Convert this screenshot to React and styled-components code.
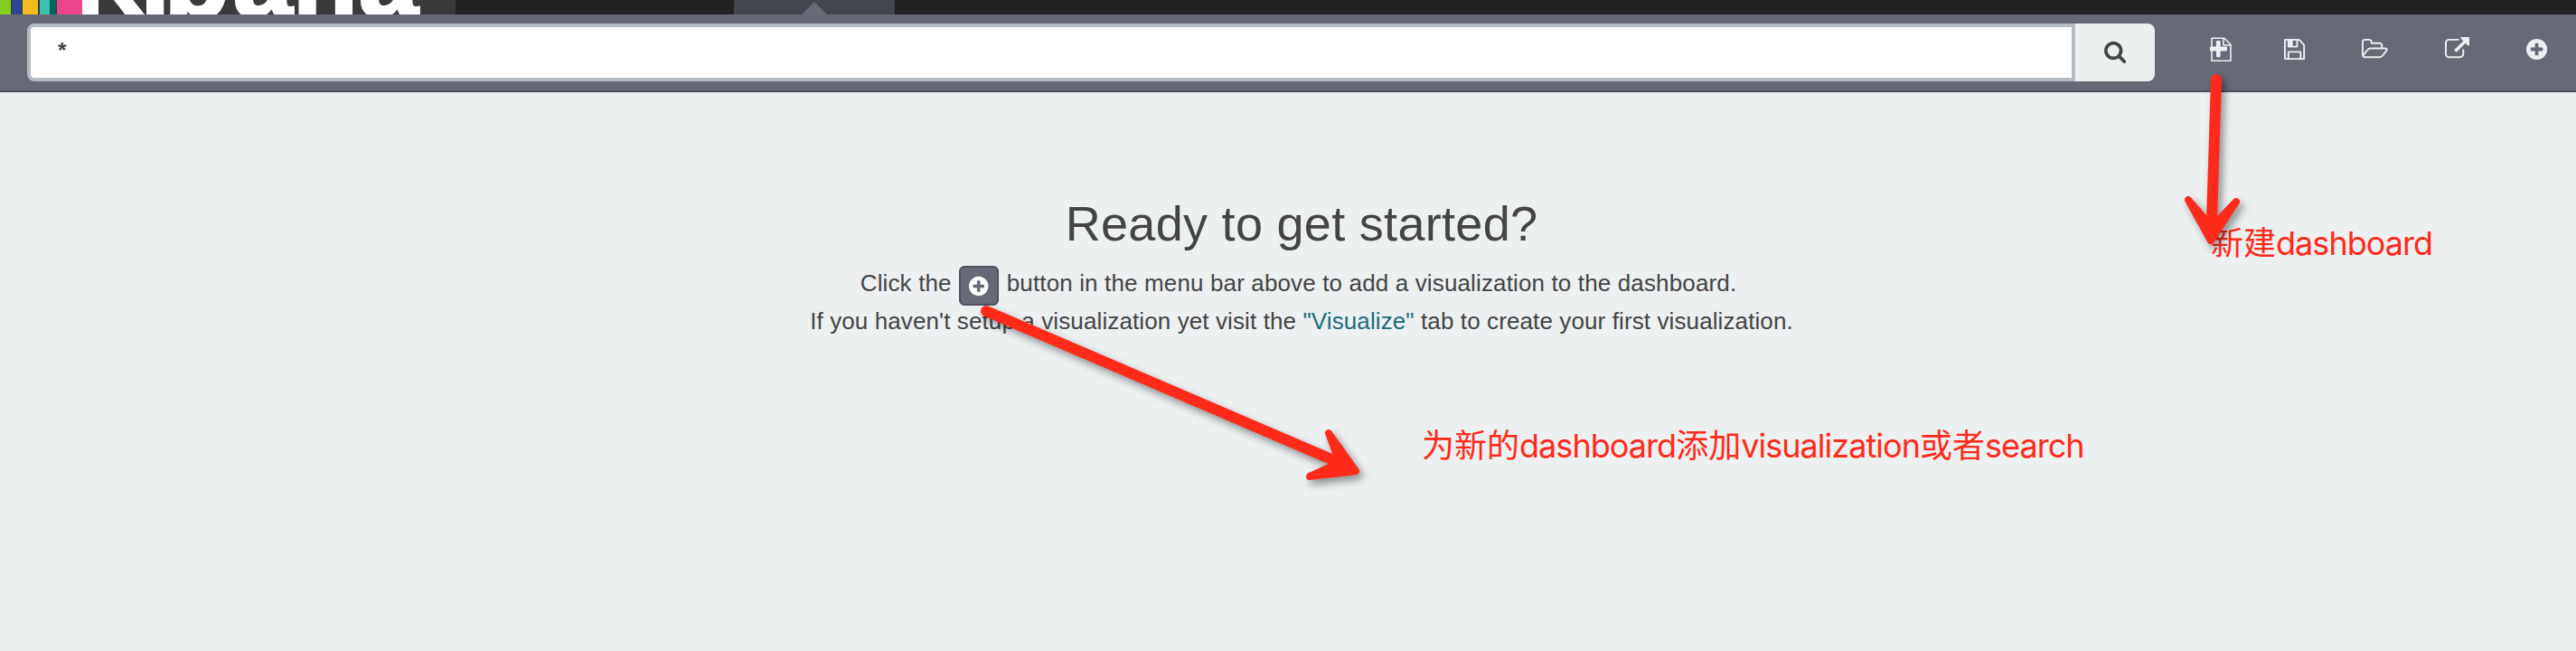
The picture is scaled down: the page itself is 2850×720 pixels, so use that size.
import React from "react";
import styled, { createGlobalStyle } from "styled-components";

const Global = createGlobalStyle`
  * { box-sizing: border-box; }
  body { margin: 0; background: #ecf0f1; font-family: "Liberation Sans", Arial, "Noto Sans CJK SC", sans-serif; color: #444; }
`;

const Page = styled.div`
  position: relative;
  width: 2850px;
  height: 720px;
  overflow: hidden;
  background: #ecf0f1;
`;

const NavBar = styled.header`
  display: flex;
  height: 16px;
  overflow: hidden;
  background: #222;
`;

const Brand = styled.div`
  display: flex;
  width: 504px;
  height: 16px;
  margin-right: 308px;
  overflow: hidden;
  background: #3a3a3a;
`;

const Stripe = styled.i`
  flex: none;
  width: ${(p) => p.$w}px;
  height: 16px;
  margin-right: ${(p) => p.$gap || 0}px;
  background: ${(p) => p.$color};
`;

const Wordmark = styled.span`
  align-self: flex-end;
  margin-bottom: -20px;
  margin-left: -5.5px;
  font-size: 118px;
  font-weight: 700;
  line-height: 118px;
  white-space: nowrap;
  color: #fff;
  -webkit-text-stroke: 3px #fff;
`;

const Letter = styled.span`
  font-size: ${(p) => p.$size || 118}px;
  line-height: 0;
  letter-spacing: ${(p) => p.$kern || 0}px;
`;

const ActiveTab = styled.div`
  display: flex;
  justify-content: center;
  align-items: flex-end;
  width: 178px;
  height: 16px;
  background: #42464d;
`;

const Caret = styled.i`
  width: 0;
  height: 0;
  border: 14px solid transparent;
  border-top: 0;
  border-bottom-color: #656a76;
`;

const QueryBar = styled.div`
  display: flex;
  height: 86px;
  padding: 10px 0 0 30px;
  background: #656a76;
  border-bottom: 2px solid #4d5160;
`;

const QueryInput = styled.div`
  width: 2266px;
  height: 64px;
  padding: 12px 30px;
  border: 4px solid #b4bcc2;
  border-radius: 8px 0 0 8px;
  background: #fff;
  font-size: 24px;
  font-weight: 700;
  line-height: 27px;
`;

const SearchButton = styled.button`
  display: flex;
  align-items: center;
  justify-content: center;
  width: 88px;
  height: 64px;
  padding: 0 0 3px;
  border: 0;
  border-radius: 0 8px 8px 0;
  background: #ecf0f1;
  color: #444;
`;

const Actions = styled.nav`
  display: flex;
  height: 64px;
  padding: 15px 0 0 61px;
  color: #ecf0f1;
`;

const Action = styled.span`
  display: block;
  margin-right: ${(p) => p.$gap}px;
`;

const Svg = styled.svg`
  display: block;
  overflow: visible;
  fill: currentColor;
`;

const Welcome = styled.main`
  display: flex;
  flex-direction: column;
  align-items: center;
  padding: 113px 0 0 30px;
  font-size: 26px;
  white-space: nowrap;
`;

const Title = styled.h1`
  margin: 0;
  font-size: 54px;
  font-weight: 400;
  line-height: 64px;
  letter-spacing: 0.3px;
`;

const Line = styled.p`
  display: flex;
  align-items: center;
  height: 42px;
  margin: ${(p) => p.$top || 0}px ${(p) => p.$right || 0}px 0 0;
  letter-spacing: ${(p) => p.$spacing}px;
  white-space: pre;
`;

const PlusButton = styled.span`
  display: flex;
  align-items: center;
  justify-content: center;
  width: 44px;
  height: 44px;
  margin: 6px 9px 0 8px;
  border: 2px solid #4d5160;
  border-radius: 6px;
  background: #656a76;
  color: #fff;
`;

const Link = styled.a`
  color: #1f6b7a;
`;

const Note = styled.div`
  position: absolute;
  left: ${(p) => p.$x}px;
  top: ${(p) => p.$y}px;
  font-family: Inter, "Noto Sans CJK SC", sans-serif;
  font-size: 36px;
  line-height: 50px;
  color: #ff2a1a;
  white-space: nowrap;
`;

const Latin = styled.span`
  letter-spacing: -0.96px;
`;

const Arrows = styled.svg`
  position: absolute;
  inset: 0;
  filter: drop-shadow(4px 5px 4px rgba(0, 0, 0, 0.4));
`;

const ICONS = {
  search: [1664, "M1152 832q0-185-131.5-316.5t-316.5-131.5-316.5 131.5-131.5 316.5 131.5 316.5 316.5 131.5 316.5-131.5 131.5-316.5zm512 832q0 52-38 90t-90 38q-54 0-90-38l-343-342q-179 124-399 124-143 0-273.5-55.5t-225-150-150-225-55.5-273.5 55.5-273.5 150-225 225-150 273.5-55.5 273.5 55.5 225 150 150 225 55.5 273.5q0 220-124 399l343 343q37 37 37 90z"],
  save: [1536, "M384 1536h768v-384h-768v384zM1280 1536h128v-896q0-14-10-38.5t-20-34.5l-281-281q-10-10-34-20t-39-10v416q0 40-28 68t-68 28h-576q-40 0-68-28t-28-68v-416h-128v1280h128v-416q0-40 28-68t68-28h832q40 0 68 28t28 68v416zM896 608v-320q0-13-9.5-22.5t-22.5-9.5h-192q-13 0-22.5 9.5t-9.5 22.5v320q0 13 9.5 22.5t22.5 9.5h192q13 0 22.5-9.5t9.5-22.5zM1536 640v928q0 40-28 68t-68 28h-1344q-40 0-68-28t-28-68v-1344q0-40 28-68t68-28h928q40 0 88 20t76 48l280 280q28 28 48 76t20 88z"],
  open: [1920, "M1781 931q0-35-53-35h-1088q-40 0-85.5 21.5t-71.5 52.5l-294 363q-18 24-18 40 0 35 53 35h1088q40 0 86-22t71-53l294-363q18-22 18-39zm-1141-163h768v-160q0-40-28-68t-68-28h-576q-40 0-68-28t-28-68v-64q0-40-28-68t-68-28h-320q-40 0-68 28t-28 68v853l256-315q44-53 116-87.5t140-34.5zm1269 163q0 62-46 120l-295 363q-43 53-116 87.5t-140 34.5h-1088q-92 0-158-66t-66-158v-960q0-92 66-158t158-66h320q92 0 158 66t66 158v32h544q92 0 158 66t66 158v160h192q54 0 99 24.5t67 70.5q15 32 15 68z"],
  share: [1792, "M1408 928v320q0 119-84.5 203.5t-203.5 84.5h-832q-119 0-203.5-84.5t-84.5-203.5v-832q0-119 84.5-203.5t203.5-84.5h704q14 0 23 9t9 23v64q0 14-9 23t-23 9h-704q-66 0-113 47t-47 113v832q0 66 47 113t113 47h832q66 0 113-47t47-113v-320q0-14 9-23t23-9h64q14 0 23 9t9 23zm384-864v512q0 26-19 45t-45 19-45-19l-176-176-652 652q-10 10-23 10t-23-10l-114-114q-10-10-10-23t10-23l652-652-176-176q-19-19-19-45t19-45 45-19h512q26 0 45 19t19 45z"],
  plus: [1536, "M1216 960v-128q0-26-19-45t-45-19h-256v-256q0-26-19-45t-45-19h-128q-26 0-45 19t-19 45v256h-256q-26 0-45 19t-19 45v128q0 26 19 45t45 19h256v256q0 26 19 45t45 19h128q26 0 45-19t19-45v-256h256q26 0 45-19t19-45zm320-64q0 209-103 385.5t-279.5 279.5-385.5 103-385.5-103-279.5-279.5-103-385.5 103-385.5 279.5-279.5 385.5-103 385.5 103 279.5 279.5 103 385.5z"],
};

function Icon({ name, size }) {
  const [w, d] = ICONS[name];
  return (
    <Svg width={(w / 1792) * size} height={size} viewBox={`0 0 ${w} 1792`}>
      <path d={d} />
    </Svg>
  );
}

function NewIcon() {
  return (
    <Svg width="24" height="27" viewBox="0 0 24 27">
      <path d="M2 1.2H16L23 8.2V26.2H2ZM15 1.2V9H23" fill="none" stroke="currentColor" strokeWidth="1.6" strokeLinejoin="round" />
      <path d="M8 4h2.6q1 0 1 1v5.6h6.4q1 0 1 1v2.8q0 1-1 1h-6.4v5.8q0 1-1 1H8q-1 0-1-1v-5.8H1q-1 0-1-1v-2.8q0-1 1-1h6V5q0-1 1-1z" />
    </Svg>
  );
}

export default function App() {
  return (
    <Page>
      <Global />
      <NavBar>
        <Brand>
          <Stripe $w={12} $gap={1} $color="#86cc1d" />
          <Stripe $w={11} $gap={1} $color="#2c458f" />
          <Stripe $w={17} $gap={2} $color="#f3bb1b" />
          <Stripe $w={11} $color="#3cbfb3" />
          <Stripe $w={7} $gap={1} $color="#006656" />
          <Stripe $w={28} $color="#ec458d" />
          <Wordmark>
            <Letter $size={104} $kern={-5.4}>K</Letter>
            <Letter $kern={-6.3}>i</Letter>
            <Letter $kern={4.2}>b</Letter>
            <Letter $kern={0.2}>a</Letter>
            <Letter $kern={1}>n</Letter>
            <Letter>a</Letter>
          </Wordmark>
        </Brand>
        <ActiveTab><Caret /></ActiveTab>
      </NavBar>
      <QueryBar>
        <QueryInput>*</QueryInput>
        <SearchButton><Icon name="search" size={26} /></SearchButton>
        <Actions>
          <Action $gap={58}><NewIcon /></Action>
          <Action $gap={63}><Icon name="save" size={27} /></Action>
          <Action $gap={63.2}><Icon name="open" size={27} /></Action>
          <Action $gap={63}><Icon name="share" size={27} /></Action>
          <Action $gap={0}><Icon name="plus" size={27} /></Action>
        </Actions>
      </QueryBar>
      <Welcome>
        <Title>Ready to get started?</Title>
        <Line $top={13} $right={7} $spacing={0.14}>
          Click the<PlusButton><Icon name="plus" size={25} /></PlusButton>button in the menu bar above to add a visualization to the dashboard.
        </Line>
        <Line $spacing={0.11}>
          If you haven't setup a visualization yet visit the <Link>"Visualize"</Link> tab to create your first visualization.
        </Line>
      </Welcome>
      <Note $x={2446} $y={244}>新建<Latin>dashboard</Latin></Note>
      <Note $x={1573} $y={468}>
        为新的<Latin>dashboard</Latin>添加<Latin>visualization</Latin>或者<Latin>search</Latin>
      </Note>
      <Arrows width="2850" height="720" fill="#ff2a1a" stroke="#ff2a1a" strokeLinecap="round" strokeLinejoin="round">
        <path d="M2452 88L2447 245" fill="none" strokeWidth="12" />
        <path d="M2421 221L2446 266L2474 223L2447 251Z" strokeWidth="8" />
        <path d="M1091 344L1487 514" fill="none" strokeWidth="12" />
        <path d="M1470 479L1500 521L1449 527L1482 512Z" strokeWidth="8" />
      </Arrows>
    </Page>
  );
}
